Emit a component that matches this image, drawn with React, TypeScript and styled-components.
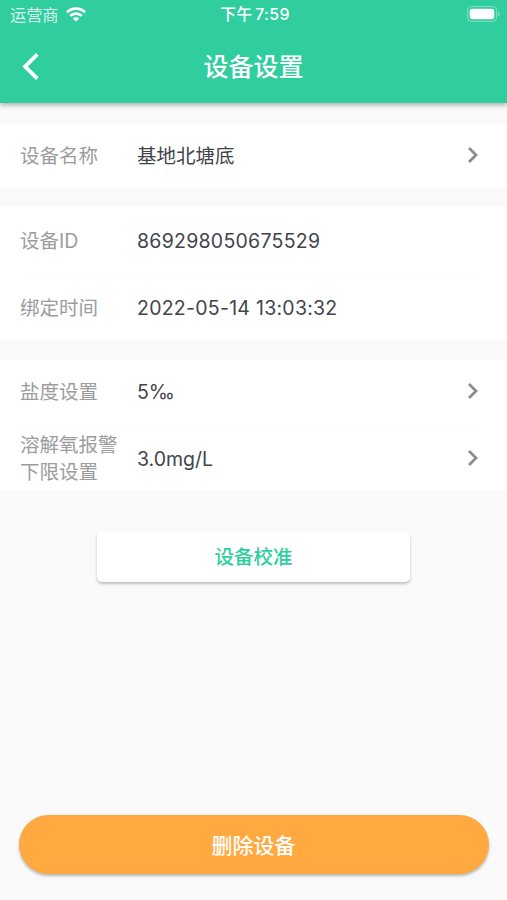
import React from 'react';
import styled, { createGlobalStyle } from 'styled-components';

const GlobalStyle = createGlobalStyle`
  * { box-sizing: border-box; }
  body {
    margin: 0;
    background: #fafafa;
    font-family: Inter, "Noto Sans CJK SC", sans-serif;
  }
  button { font-family: inherit; border: 0; padding: 0; cursor: pointer; }
`;

const Screen = styled.div`
  width: 100%;
  height: 900px;
  display: flex;
  flex-direction: column;
  background: #fafafa;
  overflow: hidden;
`;

const Header = styled.header`
  height: 103px;
  flex: none;
  background: #30cd9e;
  color: #fff;
  box-shadow: 0 2px 5px rgba(0, 0, 0, 0.32);
`;

const StatusBar = styled.div`
  height: 30px;
  padding: 0 7px 0 10px;
  display: grid;
  grid-template-columns: 1fr auto 1fr;
  align-items: center;
  line-height: 30px;
`;

const Carrier = styled.div`
  display: flex;
  align-items: center;
  gap: 7px;
  font-size: 16.2px;
  color: rgba(255, 255, 255, 0.82);

  svg { margin-bottom: 1px; }
`;

const Clock = styled.div`
  font-size: 15.8px;
  font-weight: 500;
  letter-spacing: 0.4px;
  word-spacing: -2px;
`;

const Battery = styled.svg`
  justify-self: end;
  margin-bottom: 2px;
`;

const NavBar = styled.div`
  height: 73px;
  padding: 0 20px;
  display: grid;
  grid-template-columns: 1fr auto 1fr;
  align-items: center;
`;

const BackButton = styled.button`
  width: 24px;
  height: 32px;
  display: flex;
  align-items: center;
  background: none;
`;

const Title = styled.h1`
  margin: 0;
  font-size: 25px;
  line-height: 36px;
  font-weight: 500;
`;

const Content = styled.main`
  flex: 1;
  padding: 21px 0 26px;
  display: flex;
  flex-direction: column;
  align-items: center;
`;

const Groups = styled.div`
  width: 100%;
  display: flex;
  flex-direction: column;
  gap: 19px;
`;

const Group = styled.section`
  padding: 0 27px 0 20px;
  background: #fff;

  &:last-child { margin-top: 1px; }
`;

const Row = styled.div<{ $height: number; $lowered?: boolean; $divided?: boolean }>`
  height: ${(p) => p.$height}px;
  padding-top: ${(p) => (p.$lowered ? 2 : 0)}px;
  display: grid;
  grid-template-columns: 117px 1fr 20px;
  align-items: center;
  border-bottom: ${(p) => (p.$divided ? '1px solid #fcfcfc' : '0')};

  svg { margin-bottom: 2px; }
`;

const Label = styled.span`
  font-size: 19.5px;
  line-height: 27px;
  color: #9b9c9e;
  white-space: pre-line;
`;

const Value = styled.span<{ $spaced?: boolean }>`
  font-size: 19.5px;
  line-height: 27px;
  letter-spacing: ${(p) => (p.$spaced ? '0.26px' : '0')};
  color: #42444c;
`;

const CalibrateButton = styled.button`
  width: 313px;
  height: 51px;
  margin-top: 40px;
  padding-bottom: 2px;
  border-radius: 5px;
  background: #fff;
  color: #30cd9e;
  font-size: 19.5px;
  font-weight: 500;
  box-shadow: 0 2px 3px rgba(0, 0, 0, 0.24);
`;

const DeleteButton = styled.button`
  width: 470px;
  height: 59px;
  margin-top: auto;
  padding-bottom: 1px;
  border-radius: 30px;
  background: #ffa940;
  color: #fff;
  font-size: 21px;
  font-weight: 500;
  box-shadow: 0 2px 3px rgba(0, 0, 0, 0.27);
`;

const WifiIcon = () => (
  <svg width="20" height="15" viewBox="0 0 20 15" fill="none" stroke="#fff" strokeWidth="2.7">
    <path d="M1 5.2C6 .4 14 .4 19 5.2" />
    <path d="M4.2 8.9C7.4 5.8 12.6 5.8 15.8 8.9" />
    <path d="M10 14.6 6.8 11.6C8.5 9.9 11.5 9.9 13.2 11.6Z" fill="#fff" stroke="none" />
  </svg>
);

const BatteryIcon = () => (
  <Battery width="33" height="16" viewBox="0 0 33 16">
    <rect x=".6" y=".6" width="29" height="14.8" rx="4" fill="none" stroke="#fff" strokeOpacity=".4" strokeWidth="1" />
    <rect x="2.7" y="2.8" width="24.6" height="10.4" rx="2.4" fill="#fff" />
    <path d="M31 5.6Q32.6 6.4 32.6 8T31 10.4Z" fill="#fff" fillOpacity=".4" />
  </Battery>
);

const Chevron = () => (
  <svg width="20" height="20" viewBox="0 0 20 20" fill="none" stroke="#8c8c8c" strokeWidth="2.8">
    <path d="m9 3 7 7-7 7" />
  </svg>
);

type Item = {
  label: string;
  value: string;
  height: number;
  link?: boolean;
  divided?: boolean;
  spaced?: boolean;
  lowered?: boolean;
};

const groups: Item[][] = [
  [{ label: '设备名称', value: '基地北塘底', height: 64, link: true }],
  [
    { label: '设备ID', value: '869298050675529', height: 67, divided: true, spaced: true, lowered: true },
    { label: '绑定时间', value: '2022-05-14 13:03:32', height: 66, spaced: true, lowered: true },
  ],
  [
    { label: '盐度设置', value: '5‰', height: 65, link: true, divided: true },
    { label: '溶解氧报警\n下限设置', value: '3.0mg/L', height: 66, link: true, lowered: true },
  ],
];

export default function App() {
  return (
    <Screen>
      <GlobalStyle />
      <Header>
        <StatusBar>
          <Carrier>运营商<WifiIcon /></Carrier>
          <Clock>下午 7:59</Clock>
          <BatteryIcon />
        </StatusBar>
        <NavBar>
          <BackButton aria-label="返回">
            <svg width="24" height="32" viewBox="0 0 24 32" fill="none" stroke="#fff" strokeWidth="3.8">
              <path d="M17.3 3.3 5.1 15.5l12.2 12.2" />
            </svg>
          </BackButton>
          <Title>设备设置</Title>
        </NavBar>
      </Header>
      <Content>
        <Groups>
          {groups.map((items) => (
            <Group key={items[0].label}>
              {items.map((item) => (
                <Row key={item.label} $height={item.height} $divided={item.divided} $lowered={item.lowered}>
                  <Label>{item.label}</Label>
                  <Value $spaced={item.spaced}>{item.value}</Value>
                  {item.link && <Chevron />}
                </Row>
              ))}
            </Group>
          ))}
        </Groups>
        <CalibrateButton>设备校准</CalibrateButton>
        <DeleteButton>删除设备</DeleteButton>
      </Content>
    </Screen>
  );
}
